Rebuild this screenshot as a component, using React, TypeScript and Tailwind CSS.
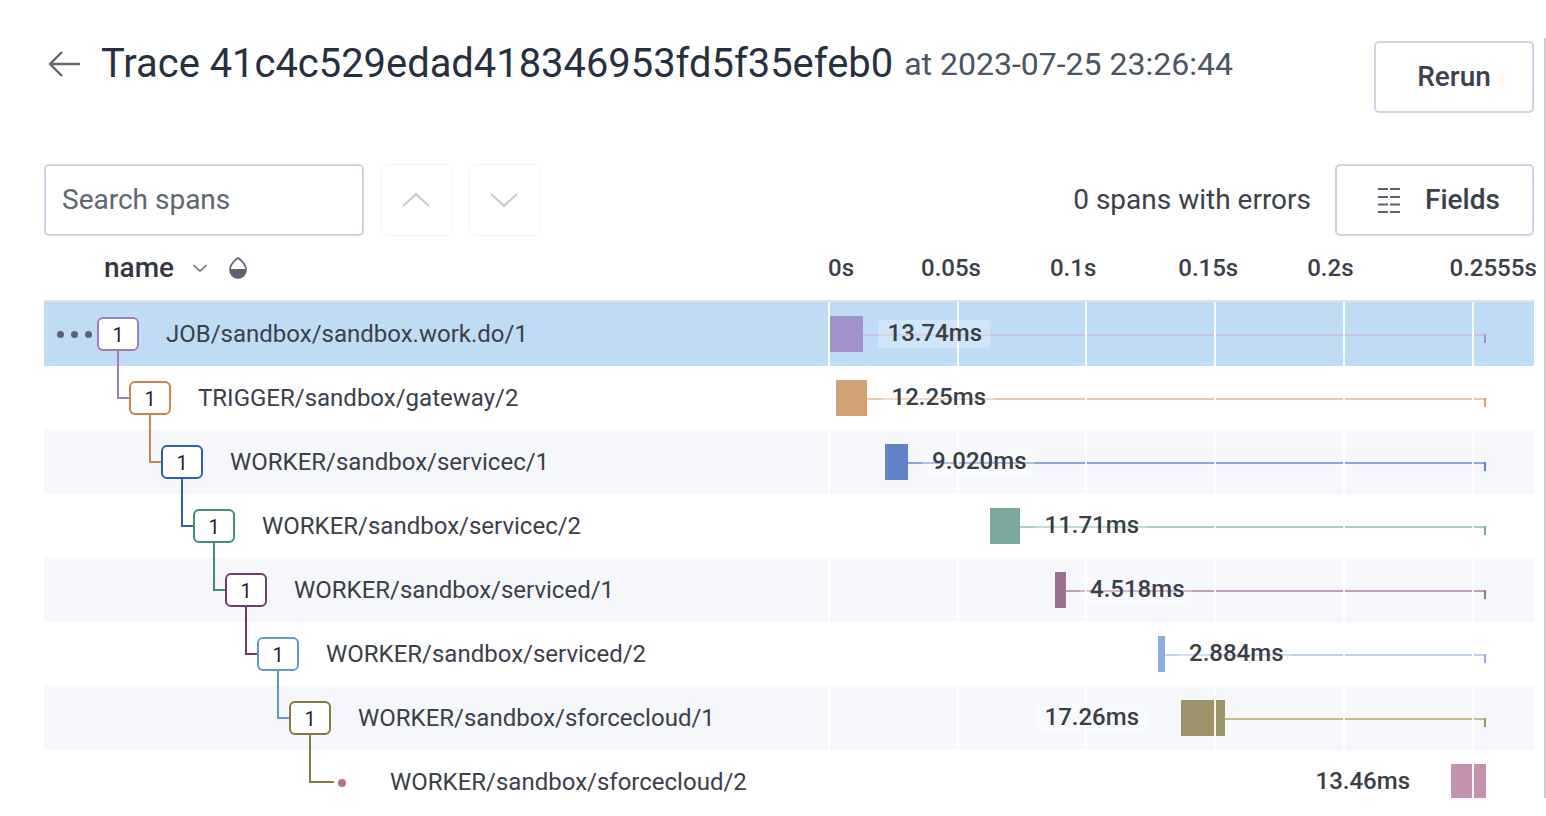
import React from "react";

const font = { fontFamily: "Roboto, sans-serif" };

type Row = {
  name: string;
  bg: string;
  box: string;
  conn?: string;
  barL: number;
  barR: number;
  bar: string;
  line?: string;
  tick?: string;
  label: string;
  labelX: number;
  pill?: string;
};

const rows: Row[] = [
  { name: "JOB/sandbox/sandbox.work.do/1", bg: "bg-[#c0dcf5]", box: "border-[#9b7dc4]", barL: 830, barR: 863, bar: "bg-[#a290c9]", line: "bg-[#c8c0e2]", tick: "bg-[#a290c9]", label: "13.74ms", labelX: 887.5, pill: "bg-white/25" },
  { name: "TRIGGER/sandbox/gateway/2", bg: "bg-white", box: "border-[#c78650]", conn: "border-[#9b7dc4]", barL: 836, barR: 867, bar: "bg-[#d0a077]", line: "bg-[#e6c9b2]", tick: "bg-[#d0a077]", label: "12.25ms", labelX: 891.5, pill: "bg-white/30" },
  { name: "WORKER/sandbox/servicec/1", bg: "bg-[#f5f7fb]", box: "border-[#2f5cb8]", conn: "border-[#c78650]", barL: 885, barR: 908, bar: "bg-[#6383c9]", line: "bg-[#8aa5de]", tick: "bg-[#6383c9]", label: "9.020ms", labelX: 932, pill: "bg-white/30" },
  { name: "WORKER/sandbox/servicec/2", bg: "bg-white", box: "border-[#3f8f7c]", conn: "border-[#2f5cb8]", barL: 990, barR: 1020, bar: "bg-[#7aa89c]", line: "bg-[#a3d0c6]", tick: "bg-[#7aa89c]", label: "11.71ms", labelX: 1044.5, pill: "bg-white/30" },
  { name: "WORKER/sandbox/serviced/1", bg: "bg-[#f5f7fb]", box: "border-[#6f3b68]", conn: "border-[#3f8f7c]", barL: 1055, barR: 1066, bar: "bg-[#9a7093]", line: "bg-[#c29abc]", tick: "bg-[#9a7093]", label: "4.518ms", labelX: 1090, pill: "bg-white/30" },
  { name: "WORKER/sandbox/serviced/2", bg: "bg-white", box: "border-[#6497d4]", conn: "border-[#6f3b68]", barL: 1158, barR: 1165, bar: "bg-[#8eadd9]", line: "bg-[#c0d3eb]", tick: "bg-[#8eadd9]", label: "2.884ms", labelX: 1189, pill: "bg-white/30" },
  { name: "WORKER/sandbox/sforcecloud/1", bg: "bg-[#f5f7fb]", box: "border-[#867a42]", conn: "border-[#6497d4]", barL: 1181, barR: 1225, bar: "bg-[#9a9468]", line: "bg-[#c4bb88]", tick: "bg-[#9a9468]", label: "17.26ms", labelX: 1044.5, pill: "bg-white/30" },
  { name: "WORKER/sandbox/sforcecloud/2", bg: "bg-white", box: "", conn: "border-[#867a42]", barL: 1451, barR: 1486, bar: "bg-[#c392ac]", label: "13.46ms", labelX: 1315.5 },
];

const gridLines = [828, 957, 1085, 1214, 1343, 1472];
const C = 828;

function Tree({ row, depth }: { row: Row; depth: number }) {
  const isLeaf = !row.box;
  return (
    <div className="flex h-full items-center" style={{ paddingLeft: 53 + depth * 32 }}>
      {depth === 0 && (
        <div className="absolute left-[13px] top-[29px] flex gap-[7px]">
          <span className="size-[7px] rounded-full bg-[#5b6372]" />
          <span className="size-[7px] rounded-full bg-[#5b6372]" />
          <span className="size-[7px] rounded-full bg-[#5b6372]" />
        </div>
      )}
      <div className="relative h-[34px] w-[42px] shrink-0">
        {row.conn && (
          <span
            className={`absolute left-[-12px] top-[-30px] h-[48px] border-b-2 border-l-2 ${isLeaf ? "w-[25px]" : "w-[12px]"} ${row.conn}`}
          />
        )}
        {isLeaf ? (
          <span className="absolute left-[17px] top-[14px] size-[8px] rounded-full bg-[#b56f94]" />
        ) : (
          <div className={`flex h-full w-full items-center justify-center rounded-[6px] border-2 bg-white pt-[1px] text-[20px] text-[#1f2430] ${row.box}`}>
            1
          </div>
        )}
      </div>
      <span className="ml-[27px] whitespace-nowrap text-[24px] text-[#3b404b]">{row.name}</span>
    </div>
  );
}

function Chart({ row }: { row: Row }) {
  const last = !row.line;
  return (
    <div className="relative h-full flex-1 overflow-hidden">
      <div
        className={`absolute top-[14px] ${last ? "h-[34px]" : "h-[36px]"} ${row.bar}`}
        style={{ left: row.barL - C, width: row.barR - row.barL }}
      />
      {row.line && (
        <>
          <div className={`absolute top-[32px] h-[2px] ${row.line}`} style={{ left: row.barR - C, width: 1484 - row.barR }} />
          <div className={`absolute left-[656px] top-[32px] h-[9px] w-[2px] ${row.tick}`} />
        </>
      )}
      {gridLines.map((x) => (
        <div key={x} className="absolute inset-y-0 w-[2px] bg-white/90" style={{ left: x - C }} />
      ))}
      {row.pill && (
        <div
          className={`absolute top-[18px] h-[28px] w-[112px] rounded-[4px] ${row.pill}`}
          style={{ left: row.labelX - 10 - C }}
        />
      )}
      <span
        className="absolute top-[16px] whitespace-nowrap text-[24px] font-medium leading-[30px] text-[#3a3e47]"
        style={{ left: row.labelX - C }}
      >
        {row.label}
      </span>
    </div>
  );
}

function Chevron({ up, cls }: { up?: boolean; cls: string }) {
  return (
    <svg width="30" height="18" viewBox="0 0 30 18" fill="none" className={cls}>
      <path d={up ? "M2 15 L15 3 L28 15" : "M2 3 L15 15 L28 3"} stroke="currentColor" strokeWidth="2" />
    </svg>
  );
}

export default function App() {
  return (
    <div className="relative h-[816px] w-[1546px] overflow-hidden bg-white" style={font}>
      <div className="absolute right-0 top-[38px] h-[760px] w-[2px] bg-[#cccccc]" />
      <div className="flex flex-col pl-[44px] pr-[12px]">
        <div className="flex h-[164px] items-start">
          <svg width="34" height="28" viewBox="0 0 34 28" fill="none" className="ml-[3px] mt-[50px] text-[#5f6674]">
            <path d="M33 14 H3 M15 2 L3 14 L15 26" stroke="currentColor" strokeWidth="2.4" />
          </svg>
          <span className="ml-[20px] mt-[37px] whitespace-nowrap text-[39.9px] leading-[54px] text-[#27303f]">
            Trace 41c4c529edad418346953fd5f35efeb0
          </span>
          <span className="ml-[11px] mt-[44px] whitespace-nowrap text-[32px] leading-[40px] text-[#4b5563]">
            at 2023-07-25 23:26:44
          </span>
          <button className="ml-auto mt-[41px] h-[72px] w-[160px] rounded-[5px] border-2 border-[#cbd5e3] text-[28px] font-medium text-[#3b404b]">
            Rerun
          </button>
        </div>

        <div className="flex h-[72px] items-center">
          <div className="flex h-[72px] w-[320px] items-center rounded-[5px] border-2 border-[#cbd5e3] pl-[16px] text-[28px] text-[#5e6573]">
            Search spans
          </div>
          <div className="ml-[17px] flex h-[72px] w-[71px] items-center justify-center rounded-[5px] border border-[#f3f4f6]">
            <Chevron up cls="mr-[2px] text-[#c8c8c8]" />
          </div>
          <div className="ml-[17px] flex h-[72px] w-[71px] items-center justify-center rounded-[5px] border border-[#f3f4f6]">
            <Chevron cls="mr-[2px] text-[#c8c8c8]" />
          </div>
          <span className="ml-auto text-[28px] text-[#3b404b]">0 spans with errors</span>
          <button className="ml-[24px] flex h-[72px] w-[199px] items-center rounded-[5px] border-2 border-[#cbd5e3] pl-[41px] text-[28px] font-medium text-[#3b404b]">
            <svg width="22" height="26" viewBox="0 0 22 26" className="text-[#5b6372]">
              <path d="M0 2 H10 M12 2 H22 M0 10 H10 M12 10 H22 M0 17.5 H10 M12 17.5 H22 M0 25 H10 M12 25 H22" stroke="currentColor" strokeWidth="2.2" />
            </svg>
            <span className="ml-[25px]">Fields</span>
          </button>
        </div>

        <div className="flex h-[66px] items-center border-b-2 border-[#dfe3ea]">
          <span className="ml-[60px] text-[28px] font-medium text-[#33373f]">name</span>
          <svg width="16" height="10" viewBox="0 0 16 10" fill="none" className="ml-[18px] text-[#5b6372]">
            <path d="M1.5 2 L8 8 L14.5 2" stroke="currentColor" strokeWidth="1.4" />
          </svg>
          <svg width="20" height="24" viewBox="0 0 20 24" className="ml-[20px] text-[#5b6372]">
            <path d="M10 2 C10 2 18 7 18 14 A8 8 0 0 1 2 14 C2 7 10 2 10 2 Z" fill="none" stroke="currentColor" strokeWidth="1.6" />
            <path d="M2 13 H18 V14 A8 8 0 0 1 2 14 Z" fill="currentColor" />
          </svg>
          <div className="ml-auto flex w-[706px] whitespace-nowrap text-[24px] font-medium text-[#3b404b]">
            <span>0s</span>
            <span className="ml-[67px]">0.05s</span>
            <span className="ml-[69px]">0.1s</span>
            <span className="ml-[82px]">0.15s</span>
            <span className="ml-[69px]">0.2s</span>
            <span className="ml-[96px]">0.2555s</span>
          </div>
        </div>

        <div className="flex flex-col">
          {rows.map((row, i) => (
            <div key={row.name} className={`flex h-[64px] ${row.bg}`}>
              <div className="relative h-full w-[784px] shrink-0">
                <Tree row={row} depth={i} />
              </div>
              <Chart row={row} />
            </div>
          ))}
        </div>
      </div>
    </div>
  );
}
